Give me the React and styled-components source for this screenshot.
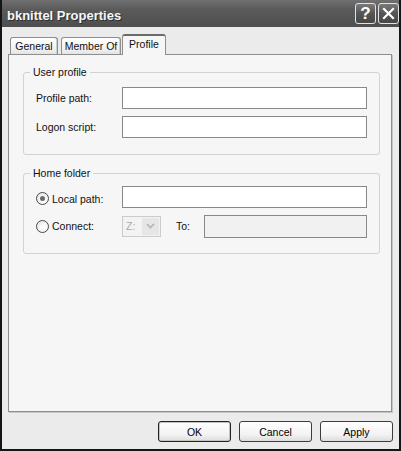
import React from 'react';
import styled, { createGlobalStyle } from 'styled-components';

const GlobalStyle = createGlobalStyle`
  html, body { margin: 0; padding: 0; background: #ebebeb; }
  body {
    font-family: "Liberation Sans", Arial, sans-serif;
    font-size: 10.5px;
    color: #111;
  }
  * { box-sizing: border-box; }
`;

const Window = styled.div`
  width: 401px;
  height: 451px;
  display: flex;
  flex-direction: column;
  background: #ebebeb;
  border: 2px solid #151515;
  border-top: none;
`;

const TitleBar = styled.div`
  height: 27px;
  flex: none;
  display: flex;
  align-items: flex-start;
  padding: 3px 0 0 5px;
  background: linear-gradient(#707070, #5a5a5a 35%, #4f4f4f);
`;

const Title = styled.div`
  flex: 1;
  margin-top: 5px;
  font-size: 13px;
  line-height: 16px;
  font-weight: bold;
  color: #f6f6f6;
  text-shadow: 1px 1px 0 #2e2e2e;
`;

const CaptionButtons = styled.div`
  display: flex;
  gap: 2px;
`;

const CaptionButton = styled.div`
  width: 21px;
  height: 21px;
  border: 1px solid #e2e2e2;
  border-radius: 3px;
  background: linear-gradient(#7a7a7a, #555 50%, #474747);
  display: flex;
  align-items: center;
  justify-content: center;
  color: #fff;
  font-size: 17px;
  font-weight: bold;
  line-height: 1;
`;

const Body = styled.div`
  flex: 1;
  display: flex;
  flex-direction: column;
  padding: 7px 6px 7px 6px;
`;

const TabStrip = styled.div`
  display: flex;
  align-items: flex-end;
  height: 20px;
  padding-left: 2px;
`;

const Tab = styled.div`
  width: ${p => p.$w}px;
  height: ${p => (p.$active ? 21 : 17)}px;
  margin: ${p => (p.$active ? '0 0 -1px -2px' : '0 3px 0 0')};
  position: relative;
  z-index: ${p => (p.$active ? 1 : 0)};
  border: 1px solid #8e8e8e;
  border-top: ${p => (p.$active ? '2px solid #6a6a6a' : '1px solid #8e8e8e')};
  border-bottom: none;
  border-radius: 3px 3px 0 0;
  background: ${p => (p.$active ? '#f6f6f6' : 'linear-gradient(#ffffff, #f1f1f1 70%, #e3e3e3)')};
  box-shadow: ${p => (p.$active ? 'none' : 'inset -1px 0 0 #cfcfcf')};
  display: flex;
  align-items: center;
  justify-content: center;
  padding-bottom: ${p => (p.$active ? 4 : 0)}px;
  white-space: nowrap;
`;

const Panel = styled.div`
  flex: 1;
  margin-right: 1px;
  border: 1px solid #8e8e8e;
  background: #f6f6f6;
  box-shadow: 1px 1px 0 #c6c6c6;
  padding: 11px 11px 0 14px;
`;

const Group = styled.fieldset`
  margin: 0 0 12px;
  padding: 0;
  border: 1px solid #d2d2d2;
  border-radius: 3px;
  min-width: 0;
`;

const Legend = styled.legend`
  margin-left: 6px;
  padding: 0 3px;
  line-height: 13px;
  color: #111;
`;

const GroupBody = styled.div`
  display: flex;
  flex-direction: column;
  gap: 7px;
  padding: ${p => p.$top}px 12px 16px 12px;
`;

const Row = styled.div`
  display: flex;
  align-items: center;
  height: 22px;
`;

const FieldLabel = styled.label`
  width: 86px;
  flex: none;
  display: flex;
  align-items: center;
  gap: 3px;
  padding-top: ${p => p.$nudge || 0}px;
`;

const TextInput = styled.input`
  flex: 1;
  min-width: 0;
  height: ${p => p.$h || 22}px;
  margin: 0;
  padding: 0 3px;
  font: inherit;
  border: 1px solid #888;
  border-radius: 0;
  background: ${p => (p.disabled ? '#f1f1f1' : '#ffffff')};
  outline: none;
`;

const Radio = styled.span`
  width: 13px;
  height: 13px;
  flex: none;
  border-radius: 50%;
  border: 1px solid #4a4a4a;
  background: radial-gradient(circle at 60% 60%, #ffffff 20%, #e2e2e2 90%);
  display: flex;
  align-items: center;
  justify-content: center;
  &::after {
    content: "";
    width: 5px;
    height: 5px;
    border-radius: 50%;
    background: ${p => (p.$checked ? '#6c6c6c' : 'transparent')};
  }
`;

const Combo = styled.div`
  width: 39px;
  height: 21px;
  flex: none;
  display: flex;
  border: 1px solid #cbcbcb;
  background: #f3f3f3;
  color: #a9a9a9;
`;

const ComboValue = styled.span`
  flex: 1;
  display: flex;
  align-items: center;
  padding-left: 3px;
`;

const ComboArrow = styled.span`
  width: 17px;
  margin: 1px;
  background: #e6e6e6;
  display: flex;
  align-items: center;
  justify-content: center;
`;

const ToLabel = styled.span`
  margin: 0 14px 0 15px;
`;

const ButtonRow = styled.div`
  display: flex;
  justify-content: flex-end;
  gap: 8px;
  margin-top: 9px;
`;

const Button = styled.button`
  width: 73px;
  height: 21px;
  margin: 0;
  padding: 0;
  font: inherit;
  color: #000;
  border: 1px solid ${p => (p.$default ? '#222' : '#3c3c3c')};
  border-radius: 3px;
  background: linear-gradient(#ffffff, #f3f3f3 65%, #dddddd);
  box-shadow: ${p => (p.$default ? 'inset 0 0 0 1px #c4c4c4' : 'none')};
`;

export default function App() {
  return (
    <>
      <GlobalStyle />
      <Window>
        <TitleBar>
          <Title>bknittel Properties</Title>
          <CaptionButtons>
            <CaptionButton>?</CaptionButton>
            <CaptionButton>
              <svg width="13" height="13" viewBox="0 0 13 13">
                <path d="M2 2 L11 11 M11 2 L2 11" stroke="#fff" strokeWidth="2.2" strokeLinecap="square" fill="none" />
              </svg>
            </CaptionButton>
          </CaptionButtons>
        </TitleBar>
        <Body>
          <TabStrip>
            <Tab $w={48}>General</Tab>
            <Tab $w={60}>Member Of</Tab>
            <Tab $w={44} $active>Profile</Tab>
          </TabStrip>
          <Panel>
            <Group>
              <Legend>User profile</Legend>
              <GroupBody $top={8}>
                <Row>
                  <FieldLabel>Profile path:</FieldLabel>
                  <TextInput />
                </Row>
                <Row>
                  <FieldLabel>Logon script:</FieldLabel>
                  <TextInput />
                </Row>
              </GroupBody>
            </Group>
            <Group>
              <Legend>Home folder</Legend>
              <GroupBody $top={6}>
                <Row>
                  <FieldLabel $nudge={3}>
                    <Radio $checked />
                    Local path:
                  </FieldLabel>
                  <TextInput />
                </Row>
                <Row>
                  <FieldLabel>
                    <Radio />
                    Connect:
                  </FieldLabel>
                  <Combo>
                    <ComboValue>Z:</ComboValue>
                    <ComboArrow>
                      <svg width="9" height="6" viewBox="0 0 9 6">
                        <path d="M1 1 L4.5 4.5 L8 1" stroke="#b4b4b4" strokeWidth="1.6" fill="none" />
                      </svg>
                    </ComboArrow>
                  </Combo>
                  <ToLabel>To:</ToLabel>
                  <TextInput disabled $h={23} />
                </Row>
              </GroupBody>
            </Group>
          </Panel>
          <ButtonRow>
            <Button $default>OK</Button>
            <Button>Cancel</Button>
            <Button>Apply</Button>
          </ButtonRow>
        </Body>
      </Window>
    </>
  );
}
